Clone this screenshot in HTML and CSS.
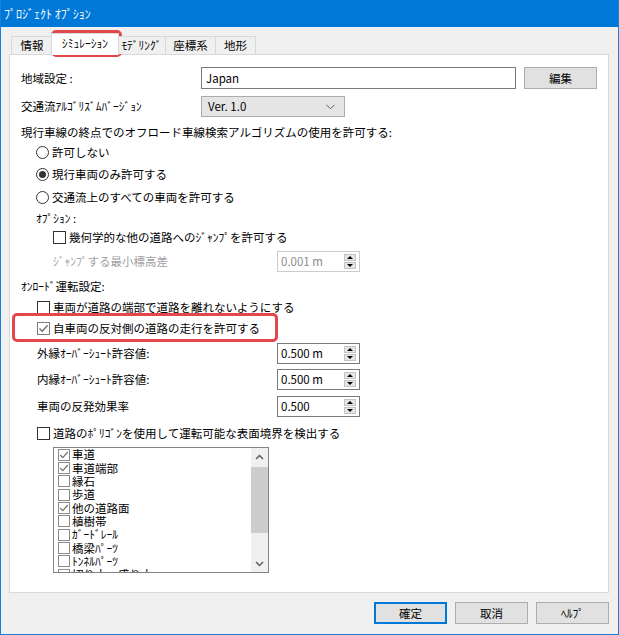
FILE: index.html
```html
<!DOCTYPE html>
<html lang="ja">
<head>
<meta charset="utf-8">
<title>ﾌﾟﾛｼﾞｪｸﾄ ｵﾌﾟｼｮﾝ</title>
<link rel="stylesheet" href="styles.css">
</head>
<body>
<div class="window">
  <div class="titlebar">ﾌﾟﾛｼﾞｪｸﾄ ｵﾌﾟｼｮﾝ</div>
  <div class="client">
    <div class="tabs">
      <div class="tab t1">情報</div>
      <div class="tab sel">ｼﾐｭﾚｰｼｮﾝ</div>
      <div class="tab t3">ﾓﾃﾞﾘﾝｸﾞ</div>
      <div class="tab t4">座標系</div>
      <div class="tab t5">地形</div>
    </div>
    <div class="panel">
      <div class="formrow r1">
        <span>地域設定 :</span>
        <span class="textbox">Japan</span>
        <span class="btn edit">編集</span>
      </div>
      <div class="formrow r2">
        <span>交通流ｱﾙｺﾞﾘｽﾞﾑﾊﾞｰｼﾞｮﾝ</span>
        <span class="select">Ver. 1.0
          <svg width="9" height="6" viewBox="0 0 9 6"><path d="M0.5 0.8 L4.5 4.8 L8.5 0.8" fill="none" stroke="#606060" stroke-width="1"/></svg>
        </span>
      </div>
      <div class="line r3">現行車線の終点でのオフロード車線検索アルゴリズムの使用を許可する:</div>
      <div class="line radio-row ind15"><span class="rb"></span>許可しない</div>
      <div class="line radio-row ind15"><span class="rb on"></span>現行車両のみ許可する</div>
      <div class="line radio-row ind15 mt1"><span class="rb"></span>交通流上のすべての車両を許可する</div>
      <div class="line opt ind15">ｵﾌﾟｼｮﾝ :</div>
      <div class="line chk-jump ind32"><span class="cb"></span>幾何学的な他の道路へのｼﾞｬﾝﾌﾟを許可する</div>
      <div class="spinrow mt5">
        <span class="ind32 disabled">ｼﾞｬﾝﾌﾟする最小標高差</span>
        <span class="spin off"><span class="val">0.001 m</span><span class="arrows"><i class="up"></i><i class="dn"></i></span></span>
      </div>
      <div class="line onroad mt5">ｵﾝﾛｰﾄﾞ運転設定:</div>
      <div class="line cbrow ind16 mt2"><span class="cb"></span>車両が道路の端部で道路を離れないようにする</div>
      <div class="line cbrow ind16 mt1"><span class="cb soft"><svg width="11" height="11" viewBox="0 0 11 11"><path d="M1.5 5.5 L4.2 8.3 L9.6 2.2" fill="none" stroke="#6a6a6a" stroke-width="1.3"/></svg></span>自車両の反対側の道路の走行を許可する</div>
      <div class="spinrow mt5">
        <span class="ind16">外縁ｵｰﾊﾞｰｼｭｰﾄ許容値:</span>
        <span class="spin"><span class="val">0.500 m</span><span class="arrows"><i class="up"></i><i class="dn"></i></span></span>
      </div>
      <div class="spinrow mt5">
        <span class="ind16">内縁ｵｰﾊﾞｰｼｭｰﾄ許容値:</span>
        <span class="spin"><span class="val">0.500 m</span><span class="arrows"><i class="up"></i><i class="dn"></i></span></span>
      </div>
      <div class="spinrow mt6">
        <span class="ind16">車両の反発効果率</span>
        <span class="spin"><span class="val">0.500</span><span class="arrows"><i class="up"></i><i class="dn"></i></span></span>
      </div>
      <div class="line cbrow ind16 mt6"><span class="cb"></span>道路のﾎﾟﾘｺﾞﾝを使用して運転可能な表面境界を検出する</div>
      <div class="listbox">
        <div class="items">
          <div class="item"><span class="lcb"><svg width="10" height="10" viewBox="0 0 10 10"><path d="M1.2 5 L3.8 7.6 L8.8 2" fill="none" stroke="#707070" stroke-width="1.2"/></svg></span>車道</div>
          <div class="item"><span class="lcb"><svg width="10" height="10" viewBox="0 0 10 10"><path d="M1.2 5 L3.8 7.6 L8.8 2" fill="none" stroke="#707070" stroke-width="1.2"/></svg></span>車道端部</div>
          <div class="item"><span class="lcb"></span>縁石</div>
          <div class="item"><span class="lcb"></span>歩道</div>
          <div class="item"><span class="lcb"><svg width="10" height="10" viewBox="0 0 10 10"><path d="M1.2 5 L3.8 7.6 L8.8 2" fill="none" stroke="#707070" stroke-width="1.2"/></svg></span>他の道路面</div>
          <div class="item"><span class="lcb"></span>植樹帯</div>
          <div class="item"><span class="lcb"></span>ｶﾞｰﾄﾞﾚｰﾙ</div>
          <div class="item"><span class="lcb"></span>橋梁ﾊﾟｰﾂ</div>
          <div class="item"><span class="lcb"></span>ﾄﾝﾈﾙﾊﾟｰﾂ</div>
          <div class="item"><span class="lcb"></span>切り土・盛り土</div>
        </div>
        <div class="vscroll">
          <div class="sarrow"><svg width="9" height="6" viewBox="0 0 9 6"><path d="M1 5 L4.5 1.5 L8 5" fill="none" stroke="#606060" stroke-width="1.5"/></svg></div>
          <div class="thumb"></div>
          <div class="sarrow bottom"><svg width="9" height="6" viewBox="0 0 9 6"><path d="M1 1 L4.5 4.5 L8 1" fill="none" stroke="#606060" stroke-width="1.5"/></svg></div>
        </div>
      </div>
    </div>
    <div class="footer">
      <span class="btn default">確定</span>
      <span class="btn">取消</span>
      <span class="btn">ﾍﾙﾌﾟ</span>
    </div>
  </div>
  <div class="mark mark-tab"></div>
  <div class="mark mark-chk"></div>
</div>
</body>
</html>
```
FILE: styles.css
```css
* { box-sizing: border-box; }
body {
  margin: 0;
  font-family: "Noto Sans CJK JP", "Noto Sans", sans-serif;
  font-size: 11.5px;
  line-height: 15px;
  color: #000;
  background: #fff;
}
.window {
  position: relative;
  width: 619px;
  height: 635px;
  background: #f0f0f0;
  border: 1px solid #1a7fd6;
  border-top: 0;
  display: flex;
  flex-direction: column;
  overflow: hidden;
}
.titlebar {
  flex: none;
  height: 27px;
  margin: 0 -1px;
  padding-left: 4px;
  background: #0078d7;
  color: #fff;
  font-size: 12px;
  display: flex;
  align-items: center;
}
.client {
  flex: 1;
  padding: 6px 9px 0 8px;
  display: flex;
  flex-direction: column;
}
.tabs {
  position: relative;
  z-index: 1;
  height: 21px;
  display: flex;
  align-items: flex-end;
}
.tab {
  height: 18px;
  border: 1px solid #d9d9d9;
  border-bottom: 0;
  background: #f0f0f0;
  display: flex;
  align-items: center;
  justify-content: center;
  white-space: nowrap;
}
.t1 { margin-left: 2px; width: 42px; }
.sel {
  position: relative;
  z-index: 2;
  margin-left: -2px;
  width: 68px;
  height: 22px;
  margin-bottom: -1px;
  background: #fff;
  padding-bottom: 2px;
}
.t3 { margin-left: -2px; width: 49px; }
.t4 { margin-left: -1px; width: 51px; }
.t5 { margin-left: -1px; width: 41px; }

.panel {
  height: 539px;
  background: #fff;
  border: 1px solid #d9d9d9;
  padding-left: 11px;
  display: flex;
  flex-direction: column;
}
.formrow {
  display: grid;
  grid-template-columns: 172px 315px 73px;
  column-gap: 8px;
  align-items: center;
  white-space: nowrap;
}
.r1 { margin-top: 12px; height: 22px; }
.r2 { margin-top: 7px; height: 21px; }
.textbox {
  height: 22px;
  border: 1px solid #7a7a7a;
  background: #fff;
  padding-left: 4px;
  display: flex;
  align-items: center;
}
.btn {
  height: 22px;
  width: 73px;
  background: #e1e1e1;
  border: 1px solid #adadad;
  display: flex;
  align-items: center;
  justify-content: center;
}
.select {
  width: 144px;
  height: 21px;
  background: #e5e5e5;
  border: 1px solid #adadad;
  padding: 0 9px 0 6px;
  display: flex;
  align-items: center;
  justify-content: space-between;
}
.line {
  display: flex;
  align-items: center;
  white-space: nowrap;
}
.r3 { margin-top: 6px; height: 18px; }
.radio-row { height: 22px; }
.opt { height: 20px; }
.chk-jump { height: 18px; }
.onroad { height: 18px; }
.cbrow { height: 20px; }
.ind15 { padding-left: 15px; }
.ind16 { padding-left: 16px; }
.ind32 { padding-left: 32px; }
.mt1 { margin-top: 1px; }
.mt2 { margin-top: 2px; }
.mt5 { margin-top: 5px; }
.mt6 { margin-top: 6px; }

.rb {
  flex: none;
  width: 13px;
  height: 13px;
  border: 1px solid #333;
  border-radius: 50%;
  background: #fff;
  margin-right: 3px;
  display: flex;
  align-items: center;
  justify-content: center;
}
.rb.on::after {
  content: "";
  width: 7px;
  height: 7px;
  border-radius: 50%;
  background: #333;
}
.cb {
  flex: none;
  width: 13px;
  height: 13px;
  border: 1px solid #333;
  background: #fff;
  margin-right: 3px;
  display: flex;
  align-items: center;
  justify-content: center;
}
.cb.soft { border-color: #7a7a7a; }

.spinrow {
  height: 21px;
  display: grid;
  grid-template-columns: 256px 83px;
  align-items: center;
  white-space: nowrap;
}
.disabled { color: #a0a0a0; }
.spin {
  height: 21px;
  border: 1px solid #7a7a7a;
  background: #fff;
  padding: 0 3px 0 3px;
  display: flex;
  align-items: center;
  justify-content: space-between;
}
.spin.off { border-color: #cccccc; color: #8c8c8c; }
.arrows {
  display: flex;
  flex-direction: column;
  gap: 1px;
}
.arrows i {
  width: 12px;
  height: 7px;
  background: #e6e6e6;
  border: 1px solid #c4c4c4;
  display: flex;
  align-items: center;
  justify-content: center;
}
.arrows i::after {
  content: "";
  border-left: 3px solid transparent;
  border-right: 3px solid transparent;
}
.arrows .up::after { border-bottom: 3px solid #000; }
.arrows .dn::after { border-top: 3px solid #000; }

.listbox {
  margin-top: 4px;
  margin-left: 32px;
  width: 216px;
  height: 126px;
  border: 1px solid #828282;
  background: #fff;
  display: flex;
  overflow: hidden;
}
.items {
  flex: 1;
  padding-left: 4px;
  overflow: hidden;
  line-height: 13px;
}
.item {
  height: 13.35px;
  display: flex;
  align-items: center;
  white-space: nowrap;
}
.lcb {
  flex: none;
  width: 12px;
  height: 12px;
  border: 1px solid #8c8c8c;
  background: #fff;
  margin-right: 2px;
  display: flex;
  align-items: center;
  justify-content: center;
}
.vscroll {
  flex: none;
  width: 17px;
  background: #f0f0f0;
  display: flex;
  flex-direction: column;
}
.sarrow {
  height: 17px;
  display: flex;
  align-items: center;
  justify-content: center;
}
.thumb {
  margin-top: 2px;
  height: 66px;
  background: #cdcdcd;
}
.sarrow.bottom { margin-top: auto; }

.footer {
  margin-top: 9px;
  display: flex;
  justify-content: flex-end;
  gap: 8px;
}
.footer .btn { width: 73px; height: 22px; }
.btn.default {
  border-color: #0078d7;
  box-shadow: inset 0 0 0 1px #0078d7;
}

.mark {
  position: absolute;
  border: 3px solid #e2474b;
  border-radius: 5px;
  pointer-events: none;
}
.mark-tab { left: 50px; top: 30px; width: 71px; height: 27px; }
.mark-chk { left: 11px; top: 313px; width: 266px; height: 29px; }
```
